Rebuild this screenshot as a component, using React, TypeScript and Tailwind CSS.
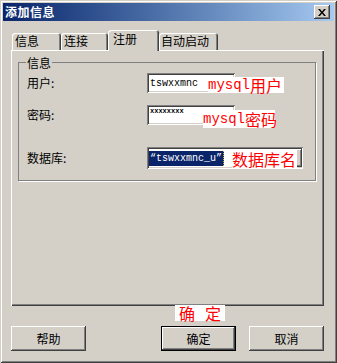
import React from 'react';

const raised =
  'bg-[#d4d0c8] shadow-[inset_-1px_-1px_#404040,inset_1px_1px_#fff,inset_-2px_-2px_#808080]';
const sunken =
  'bg-white shadow-[inset_1px_1px_#808080,inset_-1px_-1px_#fff,inset_2px_2px_#404040,inset_-2px_-2px_#d4d0c8]';

const tabs = [
  { label: '信息', cls: 'w-[49px] h-[17px] pl-[3px] pt-[1px]', active: false },
  { label: '连接', cls: 'w-[47px] h-[17px] pl-[3px] pt-[1px]', active: false },
  { label: '注册', cls: 'w-[51px] h-[21px] pl-[5px] pt-[2px] -mb-[1px] relative z-10', active: true },
  { label: '自动启动', cls: 'w-[59px] h-[17px] pl-[2px] pt-[1px]', active: false },
];

const Annotation: React.FC<{ latin?: string; cjk: string; className: string }> = ({
  latin,
  cjk,
  className,
}) => (
  <div
    className={`absolute bg-white text-[#ff0000] flex items-center leading-none whitespace-nowrap ${className}`}
  >
    {latin && (
      <span className="font-['Liberation_Mono',monospace] text-[14px] leading-none">{latin}</span>
    )}
    <span className="text-[16px] leading-none">{cjk}</span>
  </div>
);

export default function App() {
  return (
    <div className="relative w-[337px] h-[363px] bg-[#d4d0c8] p-[3px] flex flex-col text-black text-[12px] font-['Noto_Sans_CJK_SC','Noto_Sans',sans-serif] shadow-[inset_1px_1px_#d4d0c8,inset_-1px_-1px_#404040,inset_2px_2px_#fff,inset_-2px_-2px_#808080]">
      {/* title bar */}
      <div className="h-[18px] flex items-center justify-between pl-[2px] pr-[4px] bg-linear-to-r from-[#0a246a] to-[#a6caf0]">
        <span className="text-white font-bold text-[12px] tracking-[0.5px] leading-none">添加信息</span>
        <div className={`w-[16px] h-[14px] flex items-center justify-center ${raised}`}>
          <svg width="8" height="7" viewBox="0 0 8 7">
            <path d="M0 0h2l2 2.5L6 0h2L5 3.5 8 7H6L4 4.5 2 7H0l3-3.5z" fill="#000" />
          </svg>
        </div>
      </div>

      {/* tabs */}
      <div className="mt-[9px] ml-[8px] h-[20px] flex items-end">
        <div className="w-[1px]" />
        {tabs.map((t) => (
          <div
            key={t.label}
            className={`${t.cls} bg-[#d4d0c8] rounded-t-[3px] leading-[14px] shadow-[inset_1px_1px_#fff,inset_-1px_0_#404040,inset_-2px_0_#808080]`}
          >
            {t.label}
          </div>
        ))}
      </div>

      {/* panel */}
      <div className="ml-[8px] w-[313px] h-[256px] shadow-[inset_1px_1px_#fff,inset_-1px_-1px_#404040,inset_-2px_-2px_#808080] pt-[6px]">
        <fieldset className="ml-[7px] w-[298px] border border-[#808080] shadow-[1px_1px_#fff]">
          <legend className="ml-[7px] px-[1px] leading-[13px]">信息</legend>
          <div className="pl-[8px] pt-[4px] pb-[11px] flex flex-col">
            <div className="h-[20px] flex items-center">
              <span className="w-[120px]">用户:</span>
              <div className={`w-[88px] h-[20px] pl-[3px] flex items-center ${sunken}`}>
                <span className="font-['Liberation_Mono',monospace] text-[10px]">tswxxmnc</span>
              </div>
            </div>
            <div className="mt-[12px] h-[20px] flex items-center">
              <span className="w-[120px]">密码:</span>
              <div className={`w-[88px] h-[20px] pl-[3px] pt-[3px] flex items-start ${sunken}`}>
                <span className="font-['Liberation_Mono',monospace] text-[7px] font-bold leading-none">
                  xxxxxxxx
                </span>
              </div>
            </div>
            <div className="mt-[22px] h-[22px] flex items-center">
              <span className="w-[120px]">数据库:</span>
              <div className={`w-[156px] h-[22px] pl-[2px] pr-[1px] flex items-center justify-between ${sunken}`}>
                <span className="w-[75px] h-[15px] bg-[#0a246a] text-white font-['Liberation_Mono',monospace] text-[10px] leading-[15px] pl-[1px] border-r border-dotted border-[#d8b040]">
                  “tswxxmnc_u”
                </span>
                <div className={`w-[18px] h-[18px] ${raised}`} />
              </div>
            </div>
          </div>
        </fieldset>
      </div>

      {/* buttons */}
      <div className="mt-[20px] ml-[8px] w-[313px] h-[25px] flex">
        <button className={`w-[75px] h-[25px] ${raised}`}>帮助</button>
        <div className="flex-1" />
        <button className="w-[75px] h-[25px] bg-[#d4d0c8] shadow-[inset_0_0_0_1px_#000,inset_-2px_-2px_#404040,inset_2px_2px_#fff,inset_-3px_-3px_#808080]">
          确定
        </button>
        <button className={`ml-[13px] w-[75px] h-[25px] ${raised}`}>取消</button>
      </div>

      {/* red notes */}
      <Annotation latin="mysql" cjk="用户" className="left-[208px] top-[77px] h-[16px] w-[76px]" />
      <Annotation latin="mysql" cjk="密码" className="left-[203px] top-[110px] h-[18px] w-[72px]" />
      <Annotation cjk="数据库名" className="left-[232px] top-[150px] h-[18px] w-[65px]" />
      <div className="absolute left-[175px] top-[305px] w-[50px] h-[16px] bg-white text-[#ff0000] text-[16px] leading-none flex items-center justify-center gap-[10px]">
        <span>确</span>
        <span>定</span>
      </div>
    </div>
  );
}
